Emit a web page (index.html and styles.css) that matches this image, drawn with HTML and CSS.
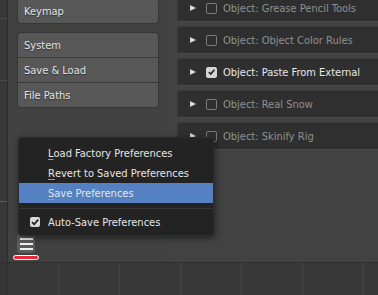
FILE: index.html
```html
<!DOCTYPE html>
<html>
<head>
<meta charset="utf-8">
<link rel="stylesheet" href="styles.css">
</head>
<body>
<div class="top">
  <div class="strip"></div>
  <nav class="nav">
    <div class="group first">
      <div class="nbtn h24">Keymap</div>
    </div>
    <div class="group">
      <div class="nbtn h24">System</div>
      <div class="nbtn h25">Save &amp; Load</div>
      <div class="nbtn h25">File Paths</div>
    </div>
    <div class="footer">
      <div class="burger">
        <span></span><span></span><span></span>
        <div class="mark"></div>
      </div>
    </div>
  </nav>
  <main class="main">
    <div class="row first"><span class="tri"></span><span class="cb"></span><span class="lbl">Object: Grease Pencil Tools</span></div>
    <div class="row"><span class="tri"></span><span class="cb"></span><span class="lbl">Object: Object Color Rules</span></div>
    <div class="row"><span class="tri"></span><span class="cb on"><svg viewBox="0 0 10 10" width="10" height="10"><path d="M2 5.2 L4.2 7.3 L8.2 2.6" fill="none" stroke="#222" stroke-width="1.8"/></svg></span><span class="lbl on">Object: Paste From External</span></div>
    <div class="row"><span class="tri"></span><span class="cb"></span><span class="lbl">Object: Real Snow</span></div>
    <div class="row"><span class="tri"></span><span class="cb"></span><span class="lbl">Object: Skinify Rig</span></div>
  </main>
</div>
<div class="bottom">
  <div class="cell c0"></div>
  <div class="cell c1"></div>
  <div class="cell"></div>
  <div class="cell"></div>
  <div class="cell"></div>
  <div class="cell"></div>
  <div class="cell"></div>
  <div class="cell last"></div>
</div>
<div class="menu">
  <div class="item"><span class="u">L</span>oad Factory Preferences</div>
  <div class="item"><span class="u">R</span>evert to Saved Preferences</div>
  <div class="item hl"><span class="u">S</span>ave Preferences</div>
  <div class="sep"></div>
  <div class="item chk"><span class="mcb"><svg viewBox="0 0 10 10" width="10" height="10"><path d="M2 5.2 L4.2 7.3 L8.2 2.6" fill="none" stroke="#222" stroke-width="1.8"/></svg></span>Auto-Save Preferences</div>
</div>
</body>
</html>
```

FILE: styles.css
```css
* { box-sizing: border-box; }
html, body { margin: 0; padding: 0; }
body {
  width: 378px;
  height: 295px;
  overflow: hidden;
  position: relative;
  background: #393939;
  font-family: "DejaVu Sans", "Liberation Sans", sans-serif;
  font-stretch: condensed;
  font-size: 11px;
  color: #e6e6e6;
}
.top {
  display: flex;
  height: 263px;
  border-bottom: 1px solid #2e2e2e;
}
.strip {
  width: 8px;
  flex: none;
  background:
    linear-gradient(#4a4a4a, #4a4a4a) 0 18px / 7px 1px no-repeat,
    linear-gradient(#4a4a4a, #4a4a4a) 0 80px / 7px 1px no-repeat,
    linear-gradient(#b23a3a, #b23a3a) 0 201px / 7px 1px no-repeat,
    #383838;
  border-right: 1px solid #2c2c2c;
}
.nav {
  width: 155px;
  flex: none;
  background: #414141;
  padding-left: 9px;
  display: flex;
  flex-direction: column;
}
.group {
  width: 142px;
  border: 1px solid #363636;
  border-radius: 4px;
  background: #575757;
  overflow: hidden;
  margin-top: 8px;
}
.group.first { margin-top: -2px; }
.nbtn {
  display: flex;
  align-items: center;
  padding-left: 6px;
  color: #e4e4e4;
  text-shadow: 0 1px 1px rgba(0,0,0,0.45);
}
.nbtn + .nbtn { border-top: 1px solid #3b3b3b; }
.h24 { height: 24px; }
.h25 { height: 25px; }
.footer {
  margin-top: auto;
  padding-bottom: 9px;
  padding-left: 0;
}
.burger {
  position: relative;
  width: 18px;
  height: 19px;
  background: #5b5b5b;
  border-radius: 3px;
  display: flex;
  flex-direction: column;
  align-items: center;
  justify-content: center;
  gap: 3px;
}
.burger span {
  display: block;
  width: 13px;
  height: 2px;
  background: #f0f0f0;
}
.mark {
  position: absolute;
  left: -4px;
  top: 21px;
  width: 26px;
  height: 5px;
  border-radius: 3px;
  background: #e8283a;
  border: 1.5px solid #ffffff;
}
.main {
  flex: 1;
  background: #424242;
  padding-left: 14px;
  overflow: hidden;
}
.row {
  height: 28px;
  margin-top: 4px;
  margin-right: -20px;
  background: #2f2f2f;
  border: 1px solid #383838;
  border-bottom-color: #4a4a4a;
  border-radius: 4px;
  display: flex;
  align-items: center;
  padding-left: 12px;
}
.row.first { margin-top: -6px; }
.tri {
  width: 0;
  height: 0;
  border-left: 6px solid #d8d8d8;
  border-top: 3.5px solid transparent;
  border-bottom: 3.5px solid transparent;
  margin-right: 10px;
}
.cb {
  width: 11px;
  height: 11px;
  border: 1px solid #7a7a7a;
  border-radius: 2px;
  margin-right: 6px;
  display: flex;
  align-items: center;
  justify-content: center;
}
.cb.on {
  background: #d6d6d6;
  border-color: #d6d6d6;
}
.lbl { color: #8f8f8f; white-space: nowrap; }
.lbl.on { color: #e8e8e8; }
.bottom {
  display: flex;
  height: 32px;
}
.cell {
  width: 61px;
  flex: none;
  border-left: 1px solid #464646;
}
.cell.c0 { width: 8px; border-left: none; border-right: 1px solid #2e2e2e; background: #353535; }
.cell.c1 { width: 50px; border-left: none; }
.cell.last { width: 20px; }
.menu {
  position: absolute;
  left: 18px;
  top: 137px;
  width: 196px;
  height: 99px;
  background: #232323;
  border: 1px solid #2c2c2c;
  border-radius: 4px;
  padding: 5px 0 0;
  box-shadow: 1px 2px 6px rgba(0,0,0,0.5);
}
.item {
  height: 20px;
  display: flex;
  align-items: center;
  padding-left: 29px;
  color: #e6e6e6;
  white-space: nowrap;
}
.item.hl { background: #5580c1; }
.u {
  text-decoration: underline;
  text-decoration-color: #9a9a9a;
  text-underline-offset: 2px;
}
.sep {
  height: 9px;
  background: linear-gradient(#373737, #373737) 0 5px / 100% 1px no-repeat;
}
.item.chk { padding-left: 11px; }
.mcb {
  width: 10px;
  height: 10px;
  background: #d8d8d8;
  border-radius: 2px;
  margin-right: 8px;
  display: flex;
  align-items: center;
  justify-content: center;
}
```
